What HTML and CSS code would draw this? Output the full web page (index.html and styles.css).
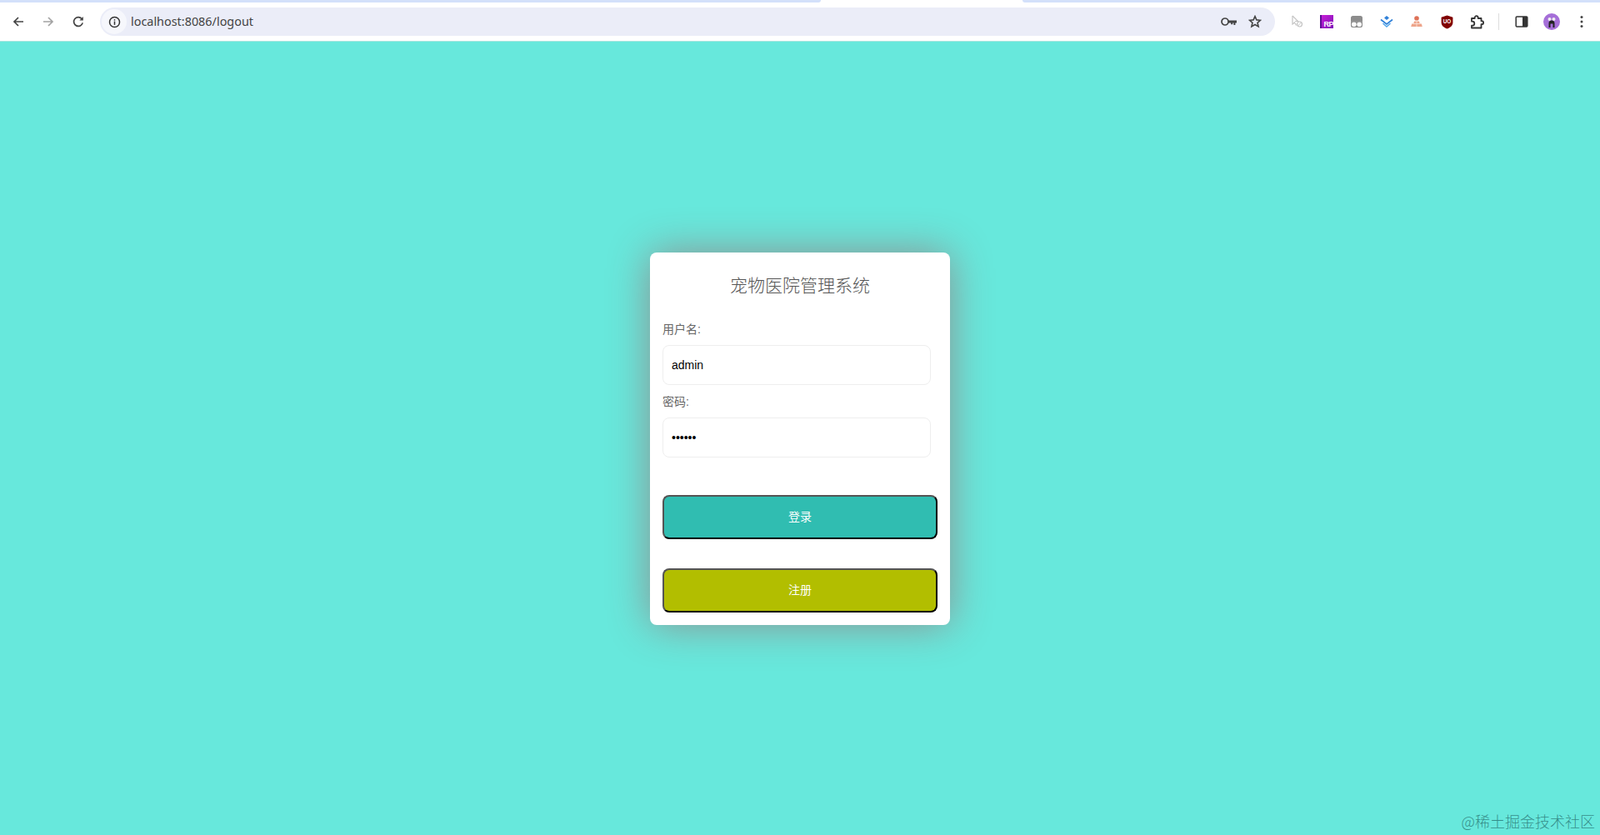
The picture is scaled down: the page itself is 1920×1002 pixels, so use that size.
FILE: index.html
```html
<!DOCTYPE html>
<html lang="zh-CN">
<head>
    <meta charset="UTF-8">
    <meta name="viewport" content="width=device-width, initial-scale=1.0">
    <title>宠物医院管理系统</title>
    <link rel="stylesheet" href="styles.css">
</head>
<body>
    <div class="tabstrip">
        <div class="tab-rest tab-left"></div>
        <div class="tab-active"></div>
        <div class="tab-rest tab-right"></div>
    </div>

    <div class="toolbar">
        <div class="nav-btn">
            <svg viewBox="0 0 16 16" width="16" height="16"><path d="M14 8H3M8 3L3 8l5 5" stroke="#444" stroke-width="1.7" fill="none"/></svg>
        </div>
        <div class="nav-btn">
            <svg viewBox="0 0 16 16" width="16" height="16"><path d="M2 8h11M8 3l5 5-5 5" stroke="#a3a3a3" stroke-width="1.7" fill="none"/></svg>
        </div>
        <div class="nav-btn">
            <svg viewBox="0 0 16 16" width="16" height="16"><path d="M13.2 9.4A5.4 5.4 0 1 1 12 4.4" stroke="#444" stroke-width="1.7" fill="none"/><path d="M9.4 6.4h4.4V2z" fill="#444"/></svg>
        </div>

        <div class="address-bar">
            <div class="site-info">
                <svg viewBox="0 0 16 16" width="15" height="15"><circle cx="8" cy="8" r="6.4" stroke="#333" stroke-width="1.6" fill="none"/><rect x="7.2" y="7" width="1.6" height="4.6" fill="#333"/><rect x="7.2" y="4.4" width="1.6" height="1.6" fill="#333"/></svg>
            </div>
            <span class="url">localhost:8086/logout</span>
            <div class="address-icons">
                <svg viewBox="0 0 19 12" width="19" height="12"><circle cx="5" cy="6" r="4" stroke="#444" stroke-width="1.7" fill="none"/><path d="M9 4.500h10v3h-1.600v2.500h-2V7.500h-1.200v1.800h-2V7.500H9z" fill="#444"/></svg>
                <svg viewBox="0 0 16 16" width="16" height="16"><path d="M8 1.600l1.900 4.300 4.600.4-3.500 3 1.100 4.600L8 11.500l-4.100 2.400L5 9.300l-3.500-3 4.600-.4z" stroke="#444" stroke-width="1.600" fill="none"/></svg>
            </div>
        </div>

        <div class="extensions">
            <div class="ext">
                <svg viewBox="0 0 16 16" width="16" height="16"><path d="M3 1v10l2.500-2 2 3.500" stroke="#c4c4c4" stroke-width="1.200" fill="none"/><path d="M3 1l6.500 6.500H6" stroke="#c4c4c4" stroke-width="1.200" fill="none"/><circle cx="11.500" cy="11" r="3" stroke="#c4c4c4" stroke-width="1.200" fill="none"/><path d="M9.500 13l4-4" stroke="#c4c4c4"/></svg>
            </div>
            <div class="ext">
                <div class="rp-logo"><span>RP</span></div>
            </div>
            <div class="ext">
                <svg viewBox="0 0 16 16" width="16" height="16"><path d="M3.500 1h9A2.500 2.500 0 0 1 15 3.500V13a2 2 0 0 1-2 2H3a2 2 0 0 1-2-2V3.500A2.500 2.500 0 0 1 3.500 1z" fill="#8c8c8c"/><circle cx="4.800" cy="11.200" r="2.800" fill="#fff"/><circle cx="11.200" cy="11.200" r="2.800" fill="#fff"/><path d="M1 8h14" stroke="#a8a8a8" stroke-width=".6"/></svg>
            </div>
            <div class="ext">
                <svg viewBox="0 0 16 16" width="16" height="16"><path d="M8 1l3 2.500L8 6 5 3.500z" fill="#2f80d8"/><path d="M1 5.500L8 11l7-5.500" stroke="#2f80d8" stroke-width="1.600" fill="none"/><path d="M3.500 10L8 14l4.500-4" stroke="#55a7ea" stroke-width="1.600" fill="none"/></svg>
            </div>
            <div class="ext">
                <svg viewBox="0 0 16 16" width="16" height="16"><circle cx="8" cy="4" r="2.800" fill="#de7258"/><path d="M5 7.500h6l.8 3h2l1 3.500H1.200l1-3.500h2z" fill="#eea58b"/><path d="M8 6v8M4 10.500h8" stroke="#fbe3da" stroke-width=".8"/></svg>
            </div>
            <div class="ext">
                <svg viewBox="0 0 16 16" width="17" height="17"><path d="M8 .5l6.500 2v6c0 3.500-3 5.800-6.500 7-3.500-1.200-6.500-3.500-6.500-7v-6z" fill="#800000"/><text x="8" y="9.800" class="ublock-text">UO</text></svg>
            </div>
            <div class="ext">
                <svg viewBox="0 0 17 17" width="17" height="17"><path d="M2 4h3.700V3.200a2 2 0 0 1 4 0V4H13.500v3.200h.6a2 2 0 0 1 0 4h-.6V15.500H2v-2.800h.8a2.500 2.500 0 0 0 0-5H2z" stroke="#333" stroke-width="1.800" fill="none" stroke-linejoin="round"/></svg>
            </div>
            <div class="divider"></div>
            <div class="ext">
                <svg viewBox="0 0 16 16" width="16" height="16"><rect x="1.200" y="2" width="13.600" height="12" rx="1" stroke="#333" stroke-width="1.500" fill="none"/><rect x="9" y="2" width="5.800" height="12" fill="#333"/></svg>
            </div>
            <div class="ext">
                <div class="avatar">
                    <svg viewBox="0 0 20 20" width="20" height="20"><circle cx="7.500" cy="7" r="2" fill="#eee"/><circle cx="12.500" cy="7" r="2" fill="#eee"/><path d="M6.500 17v-5a3.500 3.500 0 0 1 7 0v5h-2v-4.500h-3V17z" fill="#222"/></svg>
                </div>
            </div>
            <div class="ext">
                <svg viewBox="0 0 16 16" width="16" height="16"><circle cx="8" cy="2.500" r="1.500" fill="#444"/><circle cx="8" cy="8" r="1.500" fill="#444"/><circle cx="8" cy="13.500" r="1.500" fill="#444"/></svg>
            </div>
        </div>
    </div>

    <div class="page">
        <form class="login-card">
            <h2>宠物医院管理系统</h2>

            <label class="first" for="username">用户名:</label>
            <input type="text" id="username" value="admin">

            <label for="password">密码:</label>
            <input type="password" id="password" value="123456">

            <button type="button" class="btn-login">登录</button>
            <button type="button" class="btn-register">注册</button>
        </form>
        <div class="watermark">@稀土掘金技术社区</div>
    </div>
</body>
</html>
```
FILE: styles.css
```css
body {
    margin: 0;
    height: 1002px;
    display: flex;
    flex-direction: column;
    overflow: hidden;
    background-color: #67e8dc;
    font-family: "Liberation Sans", "Noto Sans CJK SC", sans-serif;
}

/* browser chrome */
.tabstrip {
    display: flex;
    height: 3px;
    background-color: #fff;
}

.tab-rest {
    background-color: #d3e0fa;
}

.tab-left {
    width: 985px;
    border-bottom-right-radius: 4px;
}

.tab-active {
    width: 242px;
}

.tab-right {
    flex: 1;
    border-bottom-left-radius: 4px;
}

.toolbar {
    display: flex;
    align-items: center;
    height: 47px;
    padding: 0 4px;
    background-color: #fff;
    border-bottom: 1px solid #a9e6df;
    box-sizing: border-box;
}

.nav-btn {
    display: flex;
    justify-content: center;
    align-items: center;
    width: 36px;
    height: 34px;
    flex-shrink: 0;
}

.address-bar {
    display: flex;
    align-items: center;
    width: 1410px;
    height: 34px;
    margin-left: 8px;
    flex-shrink: 0;
    border-radius: 17px;
    background-color: #ebedf8;
}

.site-info {
    display: flex;
    justify-content: center;
    align-items: center;
    width: 30px;
    height: 30px;
    margin-left: 2px;
    border-radius: 50%;
    background-color: #f6f7fc;
}

.url {
    margin: 0 0 2px 5px;
    font-family: "Noto Sans", sans-serif;
    font-size: 14.4px;
    color: #444;
}

.address-icons {
    display: flex;
    align-items: center;
    gap: 14px;
    margin-left: auto;
    margin-right: 16px;
}

.extensions {
    display: flex;
    align-items: center;
    margin-left: 8px;
}

.ext {
    display: flex;
    justify-content: center;
    align-items: center;
    width: 36px;
    height: 34px;
}

.rp-logo {
    display: flex;
    align-items: flex-end;
    justify-content: flex-end;
    width: 16px;
    height: 16px;
    background: linear-gradient(135deg, #c81fd6, #7a12b8);
    border-left: 2px solid #5e0f96;
    box-sizing: border-box;
}

.rp-logo span {
    font-size: 9px;
    line-height: 9px;
    font-weight: bold;
    letter-spacing: -0.5px;
    color: #fff;
}

.ublock-text {
    font-family: "Liberation Sans", sans-serif;
    font-size: 6px;
    font-weight: bold;
    fill: #fff;
    text-anchor: middle;
}

.divider {
    width: 1px;
    height: 20px;
    margin: 0 9px 0 8px;
    background-color: #ddd;
}

.avatar {
    display: flex;
    justify-content: center;
    align-items: center;
    width: 20px;
    height: 20px;
    border-radius: 50%;
    background-color: #a56fd8;
}

/* login page */
.page {
    flex: 1;
    display: flex;
    justify-content: center;
    align-items: flex-start;
    padding-top: 253px;
    position: relative;
}

.login-card {
    width: 360px;
    box-sizing: border-box;
    padding: 15px;
    border-radius: 8px;
    background-color: #fff;
    box-shadow: 0 0 50px #8f8f8f;
}

h2 {
    margin: 10px 0 0;
    font-size: 21px;
    line-height: 30px;
    font-weight: 300;
    text-align: center;
    color: #555;
}

label {
    display: block;
    margin: 12px 0 11px;
    font-size: 14px;
    line-height: 16px;
    color: #666;
}

label.first {
    margin-top: 29px;
}

input {
    display: block;
    width: 322px;
    height: 48px;
    box-sizing: border-box;
    padding: 0 10px;
    border: 1px solid #eee;
    border-radius: 8px;
    font-family: "Liberation Sans", sans-serif;
    font-size: 14px;
    color: #000;
    outline: none;
}

button {
    display: block;
    width: 100%;
    height: 53px;
    padding: 0 0 3px;
    border: 2px outset #000;
    border-radius: 8px;
    font-family: "Liberation Sans", "Noto Sans CJK SC", sans-serif;
    font-size: 14px;
    color: #fff;
    cursor: pointer;
}

.btn-login {
    margin-top: 45px;
    background-color: #30bdb1;
}

.btn-register {
    margin-top: 35px;
    background-color: #b2be00;
}

.watermark {
    position: absolute;
    right: 6px;
    bottom: 4px;
    font-family: "Noto Sans CJK SC", sans-serif;
    font-size: 18px;
    font-weight: 300;
    color: rgba(30, 100, 100, 0.7);
}
```
